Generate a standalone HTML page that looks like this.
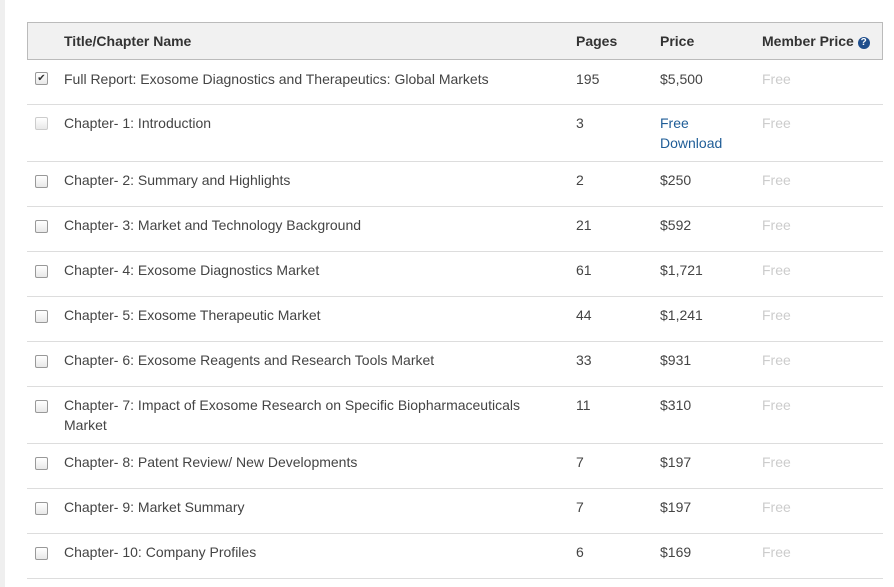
<!DOCTYPE html>
<html><head><style>
body{margin:0;width:894px;height:587px;background:#fff;font-family:"Liberation Sans",sans-serif;font-size:14px;color:#444;position:relative;overflow:hidden}
.strip{position:absolute;left:0;top:0;width:5px;height:587px;background:#efefef}
.hdr{position:absolute;left:27px;top:22px;width:854px;height:36px;background:#f1f1f1;border:1px solid #bbb}
.hdr span{position:absolute;top:10px;font-weight:bold;color:#333;font-size:14px}
.row{position:absolute;left:27px;width:856px;border-bottom:1px solid #ddd}
.row span{position:absolute;top:10px;line-height:20px}
.cb{position:absolute;left:8px;top:13px;width:11px;height:11px;border:1px solid #999;border-radius:2px;background:linear-gradient(#fff,#e8e8e8)}
.t{left:37px;width:480px}.p{left:549px}.pr{left:633px}.m{left:735px;color:#ccc}
a{color:#1f5d97;text-decoration:none}
</style></head><body>
<div class="strip"></div>
<div class="hdr"><span style="left:36px">Title/Chapter Name</span><span style="left:548px">Pages</span><span style="left:632px">Price</span><span style="left:734px">Member Price <b style="display:inline-block;width:12px;height:12px;border-radius:6px;background:#1f4e8c;color:#fff;font-size:10px;line-height:12px;text-align:center;vertical-align:1px">?</b></span></div>

<div class="row" style="top:59px;height:45px"><div class="cb" style="text-align:center;font-size:10px;line-height:11px;color:#333">✔</div><span class="t">Full Report: Exosome Diagnostics and Therapeutics: Global Markets</span><span class="p">195</span><span class="pr">$5,500</span><span class="m">Free</span></div>
<div class="row" style="top:105px;height:56px"><div class="cb" style="border-color:#ccc;top:12px"></div><span class="t" style="top:8px">Chapter- 1: Introduction</span><span class="p" style="top:8px">3</span><span class="pr" style="top:8px"><a>Free<br>Download</a></span><span class="m" style="top:8px">Free</span></div>
<div class="row" style="top:162px;height:44px"><div class="cb"></div><span class="t" style="top:8px">Chapter- 2: Summary and Highlights</span><span class="p" style="top:8px">2</span><span class="pr" style="top:8px">$250</span><span class="m" style="top:8px">Free</span></div>
<div class="row" style="top:207px;height:44px"><div class="cb"></div><span class="t" style="top:8px">Chapter- 3: Market and Technology Background</span><span class="p" style="top:8px">21</span><span class="pr" style="top:8px">$592</span><span class="m" style="top:8px">Free</span></div>
<div class="row" style="top:252px;height:44px"><div class="cb"></div><span class="t" style="top:8px">Chapter- 4: Exosome Diagnostics Market</span><span class="p" style="top:8px">61</span><span class="pr" style="top:8px">$1,721</span><span class="m" style="top:8px">Free</span></div>
<div class="row" style="top:297px;height:44px"><div class="cb"></div><span class="t" style="top:8px">Chapter- 5: Exosome Therapeutic Market</span><span class="p" style="top:8px">44</span><span class="pr" style="top:8px">$1,241</span><span class="m" style="top:8px">Free</span></div>
<div class="row" style="top:342px;height:44px"><div class="cb"></div><span class="t" style="top:8px">Chapter- 6: Exosome Reagents and Research Tools Market</span><span class="p" style="top:8px">33</span><span class="pr" style="top:8px">$931</span><span class="m" style="top:8px">Free</span></div>
<div class="row" style="top:387px;height:56px"><div class="cb"></div><span class="t" style="top:8px">Chapter- 7: Impact of Exosome Research on Specific Biopharmaceuticals Market</span><span class="p" style="top:8px">11</span><span class="pr" style="top:8px">$310</span><span class="m" style="top:8px">Free</span></div>
<div class="row" style="top:444px;height:44px"><div class="cb"></div><span class="t" style="top:8px">Chapter- 8: Patent Review/ New Developments</span><span class="p" style="top:8px">7</span><span class="pr" style="top:8px">$197</span><span class="m" style="top:8px">Free</span></div>
<div class="row" style="top:489px;height:44px"><div class="cb"></div><span class="t" style="top:8px">Chapter- 9: Market Summary</span><span class="p" style="top:8px">7</span><span class="pr" style="top:8px">$197</span><span class="m" style="top:8px">Free</span></div>
<div class="row" style="top:534px;height:44px"><div class="cb"></div><span class="t" style="top:8px">Chapter- 10: Company Profiles</span><span class="p" style="top:8px">6</span><span class="pr" style="top:8px">$169</span><span class="m" style="top:8px">Free</span></div>
</body></html>
